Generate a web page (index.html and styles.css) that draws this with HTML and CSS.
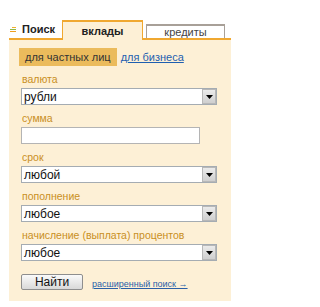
FILE: index.html
```
<!DOCTYPE html>
<html>
<head>
<meta charset="utf-8">
<link rel="stylesheet" href="styles.css">
</head>
<body>
<div class="widget">
  <div class="tabs">
    <div class="tab-search">
      <svg class="search-icon" width="6" height="6" viewBox="0 0 6 6"><rect x="2" y="0" width="4" height="1" fill="#f2b12c"/><rect x="0" y="2" width="6" height="1" fill="#8cb84a"/><rect x="0" y="4" width="6" height="1" fill="#f0a020"/></svg>
      <span>Поиск</span>
    </div>
    <div class="tab tab-active">вклады</div>
    <div class="tab-rest"><div class="tab tab-inactive">кредиты</div></div>
  </div>
  <div class="panel">
    <div class="subtabs">
      <span class="subtab-active">для частных лиц</span>
      <a class="subtab-link" href="#">для бизнеса</a>
    </div>
    <div class="field">
      <div class="label">валюта</div>
      <div class="select"><span class="value">рубли</span><span class="arrow"><svg width="7" height="4" viewBox="0 0 7 4"><path d="M0 0H7L3.5 4Z" fill="#000"/></svg></span></div>
    </div>
    <div class="field">
      <div class="label">сумма</div>
      <div class="input"></div>
    </div>
    <div class="field">
      <div class="label">срок</div>
      <div class="select"><span class="value">любой</span><span class="arrow"><svg width="7" height="4" viewBox="0 0 7 4"><path d="M0 0H7L3.5 4Z" fill="#000"/></svg></span></div>
    </div>
    <div class="field">
      <div class="label">пополнение</div>
      <div class="select"><span class="value">любое</span><span class="arrow"><svg width="7" height="4" viewBox="0 0 7 4"><path d="M0 0H7L3.5 4Z" fill="#000"/></svg></span></div>
    </div>
    <div class="field">
      <div class="label">начисление (выплата) процентов</div>
      <div class="select"><span class="value">любое</span><span class="arrow"><svg width="7" height="4" viewBox="0 0 7 4"><path d="M0 0H7L3.5 4Z" fill="#000"/></svg></span></div>
    </div>
    <div class="actions">
      <button class="btn">Найти</button>
      <a class="more" href="#">расширенный поиск →</a>
    </div>
  </div>
</div>
</body>
</html>
```
FILE: styles.css
```
html, body { margin: 0; padding: 0; background: #fff; }
body { font-family: Tahoma, "DejaVu Sans Condensed", "Liberation Sans", sans-serif; color: #333; }
.widget { margin: 20px 0 0 9px; width: 222px; }
.tabs { display: flex; align-items: flex-end; height: 20px; }
.tab-search { width: 53px; height: 18px; border-bottom: 2px solid #f0a830; display: flex; align-items: center; gap: 6px; padding-left: 1px; box-sizing: content-box; }
.tab-search span { font-family: "Liberation Sans", sans-serif; font-weight: bold; font-size: 11px; color: #222; }
.search-icon { display: block; margin-top: 1px; }
.tab { box-sizing: border-box; display: flex; align-items: center; justify-content: center; font-family: "Liberation Sans", sans-serif; font-size: 11px; }
.tab-active { width: 81px; height: 20px; border: 1px solid #f0a830; border-top-width: 2px; border-bottom: none; background: #fdf0d6; font-weight: bold; color: #222; margin-left: -1px; }
.tab-rest { flex: 1; border-bottom: 2px solid #f0a830; display: flex; }
.tab-inactive { width: 79px; height: 14px; margin-left: 3px; border: 1px solid #a8a098; border-top-width: 2px; border-bottom: none; background: #fff; color: #444; }
.panel { background: #fdf0d6; padding: 8px 0 11px 10px; }
.subtabs { display: flex; align-items: center; gap: 4px; height: 18px; margin-bottom: 7px; }
.subtab-active { background: #ebbb5c; height: 18px; padding: 0 6px; display: flex; align-items: center; font-family: "Liberation Sans", sans-serif; font-size: 11px; color: #333; }
.subtab-link { font-family: "Liberation Sans", sans-serif; font-size: 11px; color: #1f5fb0; text-decoration: underline; }
.field { margin-bottom: 7px; margin-left: 2px; }
.label { font-family: "Liberation Sans", sans-serif; font-size: 10.5px; line-height: 13px; height: 13px; color: #c98f1e; margin: 0 0 2px 1px; }
.select { width: 196px; height: 17px; box-sizing: border-box; border: 1px solid #a5acb2; background: #fff; display: flex; align-items: center; justify-content: space-between; }
.value { font-family: "Liberation Sans", sans-serif; font-size: 12px; color: #111; padding-left: 2px; }
.arrow { width: 14px; height: 15px; box-sizing: border-box; background: linear-gradient(#ebebeb, #cfcfcf); border: 1px solid #b8b8b8; display: flex; align-items: center; justify-content: center; }
.arrow svg { display: block; }
.input { width: 179px; height: 17px; box-sizing: border-box; border: 1px solid #b4b4b4; background: #fff; }
.actions { display: flex; align-items: center; gap: 9px; margin-top: 13px; margin-left: 2px; }
.btn { width: 62px; height: 16px; padding: 0; box-sizing: border-box; border: 1px solid #8e8e8e; border-radius: 2px; background: linear-gradient(#fafafa, #d9d9d9); font-family: "Liberation Sans", sans-serif; font-size: 12px; color: #111; }
.more { font-family: "Liberation Sans", sans-serif; font-size: 9px; color: #2a5fa8; text-decoration: underline; margin-top: 3px; }
```
